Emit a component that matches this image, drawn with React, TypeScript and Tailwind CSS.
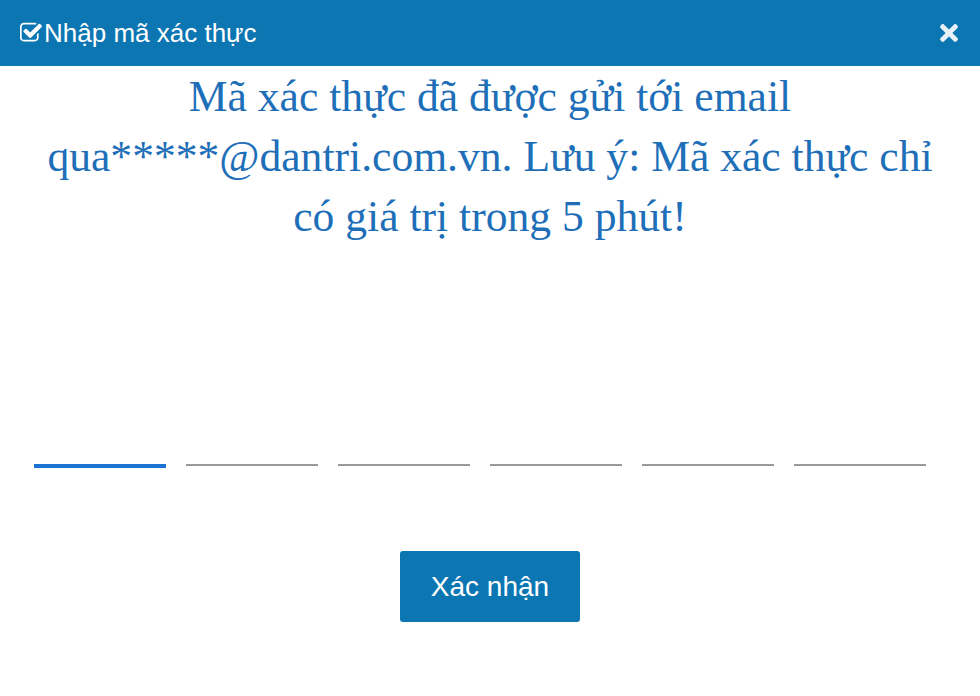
import { FaTimes } from 'react-icons/fa';

const slots = [0, 1, 2, 3, 4, 5];

function CheckSquareIcon() {
  return (
    <svg viewBox="0 0 1664 1792" className="w-[22px] h-[24px]" fill="currentColor">
      <path d="M1408 930v318q0 119-84.5 203.5T1120 1536H288q-119 0-203.5-84.5T0 1248V416q0-119 84.5-203.5T288 128h832q63 0 117 25 15 7 18 23 3 17-9 29l-49 49q-10 10-23 10-3 0-9-2-23-6-45-6H288q-66 0-113 47t-47 113v832q0 66 47 113t113 47h832q66 0 113-47t47-113V994q0-13 9-22l64-64q10-10 23-10 6 0 12 3 20 8 20 29zm231-489l-814 814q-24 24-57 24t-57-24L281 825q-24-24-24-57t24-57l110-110q24-24 57-24t57 24l263 263 647-647q24-24 57-24t57 24l110 110q24 24 24 57t-24 57z" />
    </svg>
  );
}

export default function App() {
  return (
    <div className="w-[980px] h-[696px] bg-white flex flex-col" style={{ fontFamily: '"Liberation Sans", Arial, sans-serif' }}>
      <div className="h-[66px] bg-[#0c76b3] flex items-center justify-between pl-[20px] pr-[22px] text-white">
        <div className="flex items-center text-[26px] leading-none">
          <CheckSquareIcon />
          <span className="ml-[2px]">Nhập mã xác thực</span>
        </div>
        <button className="text-[#e8f1f7] flex items-center">
          <FaTimes className="w-[18px] h-[26px]" />
        </button>
      </div>

      <p
        className="px-[40px] text-center text-[43.6px] leading-[60px] text-[#1e6fb8]"
        style={{ fontFamily: '"Liberation Serif", "Times New Roman", serif' }}
      >
        Mã xác thực đã được gửi tới email qua*****@dantri.com.vn. Lưu ý: Mã xác thực chỉ có giá trị trong 5 phút!
      </p>

      <div className="mt-[218px] flex gap-[20px] pl-[34px] pr-[54px]">
        {slots.map((i) => (
          <div key={i} className="w-[132px] h-[6px] flex items-start">
            <div className={i === 0 ? 'w-full h-[4px] bg-[#1c74d4]' : 'w-full h-[2px] bg-[#999999]'} />
          </div>
        ))}
      </div>

      <div className="mt-[81px] flex justify-center">
        <button className="w-[180px] h-[71px] rounded-[3px] bg-[#0c76b3] text-white text-[28px]">
          Xác nhận
        </button>
      </div>
    </div>
  );
}
